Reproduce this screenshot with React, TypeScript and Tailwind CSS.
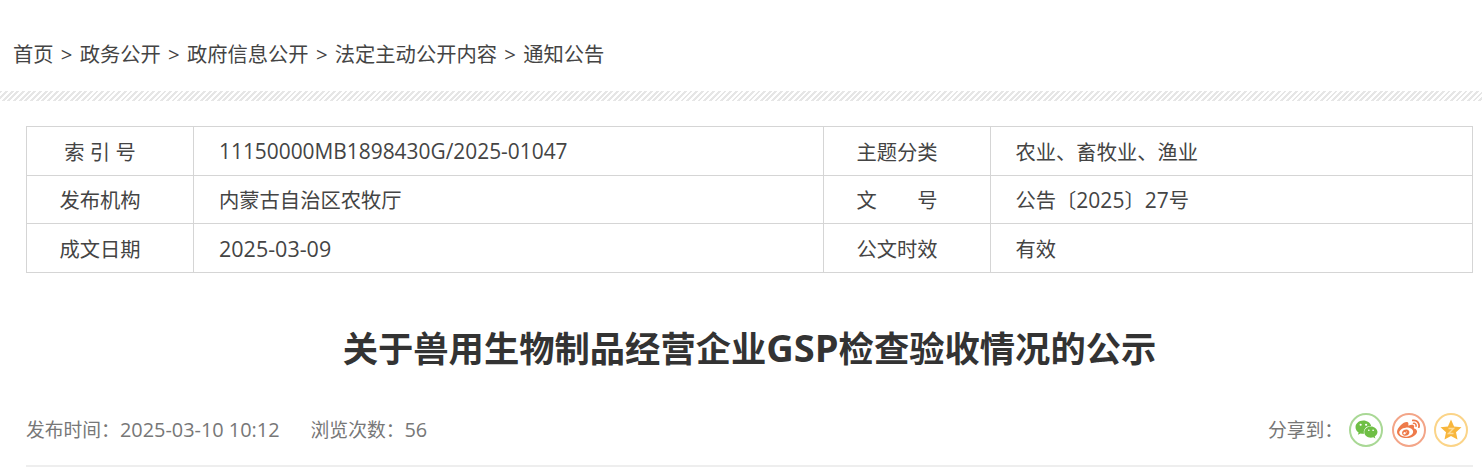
import React from 'react';
import { FaWeixin, FaWeibo } from 'react-icons/fa';

const fontStack = "font-['Open_Sans','Noto_Sans_CJK_SC',sans-serif]";

const crumbs = ['首页', '政务公开', '政府信息公开', '法定主动公开内容', '通知公告'];

// latin runs sit a bit larger than the cjk around them
const Num = ({ children }: { children: React.ReactNode }) => <span className="text-[21px]">{children}</span>;

const rows: React.ReactNode[][] = [
  ['索 引 号', <span className="text-[20.9px]">11150000MB1898430G/2025-01047</span>, '主题分类', '农业、畜牧业、渔业'],
  ['发布机构', '内蒙古自治区农牧厅', '文　　号', <>公告〔<Num>2025</Num>〕<Num>27</Num>号</>],
  ['成文日期', <span className="text-[21.5px]">2025-03-09</span>, '公文时效', '有效'],
];

export default function App() {
  return (
    <div className={`${fontStack} w-[1482px] h-[467px] overflow-hidden bg-white text-[#333]`}>
      {/* breadcrumb */}
      <div className="h-[91px] pt-[38px] pl-[13px] flex items-start text-[20.3px] leading-[32px] text-[#444]">
        {crumbs.map((c, i) => (
          <React.Fragment key={c}>
            {i > 0 && <span className="mx-[7.25px]">&gt;</span>}
            <span>{c}</span>
          </React.Fragment>
        ))}
      </div>
      <div className="h-[10px] bg-[repeating-linear-gradient(135deg,#e6e6e6_0,#e6e6e6_2px,#fff_2px,#fff_4px)]" />

      <div className="mx-[26px] w-[1447px] mt-[25px]">
        <table className="w-full table-fixed border-collapse border border-[#d5d5d5] text-[20.3px] text-[#444]">
          <colgroup>
            <col className="w-[167px]" />
            <col className="w-[630px]" />
            <col className="w-[167px]" />
            <col />
          </colgroup>
          <tbody>
            {rows.map((r, i) => (
              <tr key={i} className="h-[48.67px]">
                <td className="border border-[#d5d5d5] text-center pr-[20px] pt-[2px]">{r[0]}</td>
                <td className="border border-[#d5d5d5] pl-[25px] pt-[2px]">{r[1]}</td>
                <td className="border border-[#d5d5d5] text-center pr-[20px] pt-[2px]">{r[2]}</td>
                <td className="border border-[#d5d5d5] pl-[24.5px] pt-[2px]">{r[3]}</td>
              </tr>
            ))}
          </tbody>
        </table>

        <h1 className="mt-[48px] text-center text-[35.3px] leading-[52px] font-bold text-[#333]">
          关于兽用生物制品经营企业<span className="text-[38px]">GSP</span>检查验收情况的公示
        </h1>

        <div className="mt-[36px] flex items-center justify-between h-[40px] text-[18.8px] text-[#777]">
          <div className="flex gap-[31px]">
            <span>
              发布时间：<span className="text-[19.9px]">2025-03-10 10:12</span>
            </span>
            <span>
              浏览次数：<span className="text-[19.9px]">56</span>
            </span>
          </div>
          <div className="flex items-center mr-[5px]">
            <span className="mr-[6px]">分享到：</span>
            <div className="flex gap-[8.5px]">
              <span className="w-[34px] h-[34px] rounded-full border-2 border-[#a9d895] flex items-center justify-center text-[#6fbf45]">
                <FaWeixin size={23} />
              </span>
              <span className="w-[34px] h-[34px] rounded-full border-2 border-[#f3a588] flex items-center justify-center text-[#ee7a4a]">
                <FaWeibo size={23} />
              </span>
              <span className="w-[34px] h-[34px] rounded-full border-2 border-[#fbd488] flex items-center justify-center">
                <svg width="24" height="24" viewBox="0 0 24 24">
                  <path
                    d="M12 1.5l3.1 6.9 7.4.8-5.5 5 1.5 7.3L12 17.9l-6.5 3.6L7 14.2l-5.5-5 7.4-.8z"
                    fill="#f8b63c"
                  />
                  <path d="M9.5 10.5h5l-5 5h5" fill="none" stroke="#fcdc9a" strokeWidth="1.4" />
                </svg>
              </span>
            </div>
          </div>
        </div>
        <div className="mt-[15px] h-[3px] bg-[#eeeeee]" />
      </div>
    </div>
  );
}
